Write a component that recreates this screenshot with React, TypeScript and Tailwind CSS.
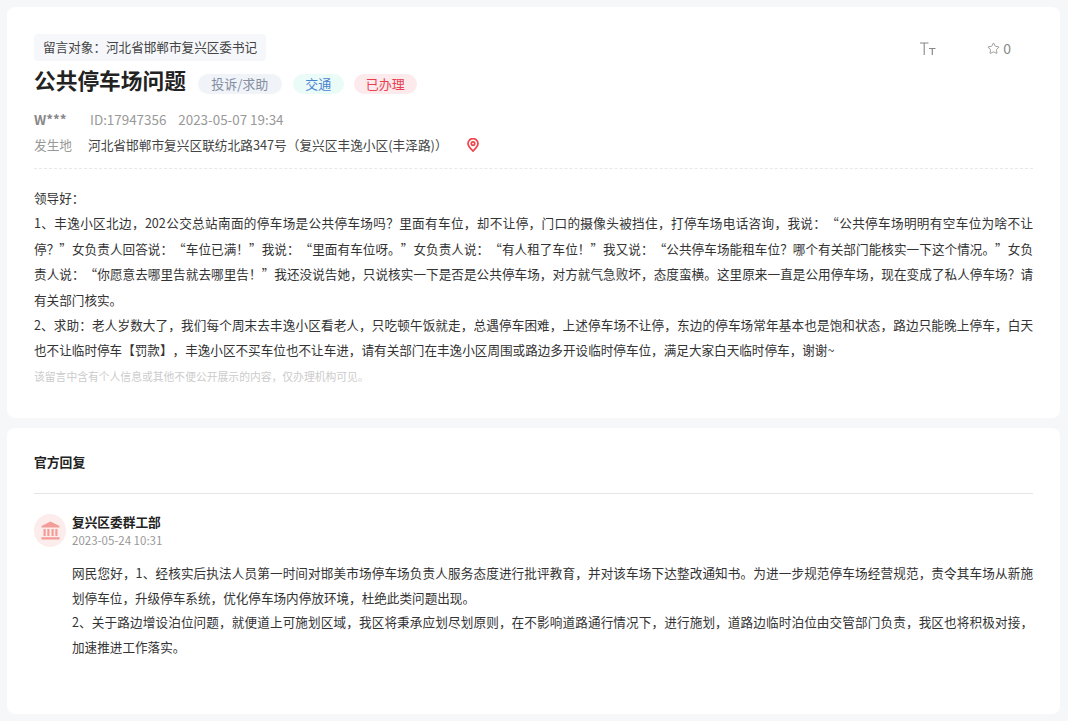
import { Star } from 'lucide-react'

function Tag({ label, className }: { label: string; className: string }) {
  return <span className={`flex h-5 items-center justify-center rounded-full text-[13px] ${className}`}>{label}</span>
}

function TextSizeIcon() {
  return (
    <svg width="16" height="13" viewBox="0 0 16 13" fill="none" stroke="#888" strokeWidth="1.1">
      <path d="M0 1h8.500M4.200 1v12" />
      <path d="M9 6.500h6.500M12.300 6.500V13" strokeWidth="1.200" />
    </svg>
  )
}

function PinIcon() {
  return (
    <svg width="12" height="14" viewBox="0 0 12 14" fill="none" stroke="#f0434a" strokeWidth="1.7">
      <path d="M6 13C3.600 10.800 1 8.600 1 5.600a5 5 0 0 1 10 0c0 3-2.600 5.200-5 7.400Z" />
      <circle cx="6" cy="5.600" r="1.700" />
    </svg>
  )
}

function BankIcon() {
  return (
    <svg width="19" height="19" viewBox="0 0 19 19" fill="#f29d97">
      <path d="M9.500 0.500 18.500 5v1.600H.500V5Z" />
      <path d="M2.500 8h2.200v7H2.500ZM6.300 8h2.200v7H6.300ZM10.500 8h2.200v7h-2.200ZM14.300 8h2.200v7h-2.200Z" />
      <path d="M.500 16.200h18v2.300H.500Z" />
    </svg>
  )
}

export default function App() {
  return (
    <div className="flex h-[721px] flex-col gap-[10px] overflow-hidden bg-[#f6f7f9] pt-[7px] pr-[8px] pl-[7px] font-['Noto_Sans_CJK_SC',sans-serif] [text-spacing-trim:space-all]">
      <section className="h-[411px] rounded-lg bg-white px-[27px] pt-[27px]">
        <div className="flex items-start justify-between">
          <div className="flex h-[27px] items-center rounded-sm bg-[#f5f7fa] px-[9px] text-[12.6px] text-[#444]">
            留言对象：河北省邯郸市复兴区委书记
          </div>
          <div className="flex items-center pt-[4px] pr-[22px] text-[14px] text-[#888]">
            <TextSizeIcon />
            <span className="ml-[51px] flex items-center gap-[3px]">
              <Star className="h-[13px] w-[13px]" strokeWidth={1.5} />
              0
            </span>
          </div>
        </div>
        <div className="mt-[4px] flex h-[30px] items-center">
          <h1 className="text-[21.7px] font-bold text-[#222]">公共停车场问题</h1>
          <div className="mt-[8px] ml-[12px] flex items-center gap-[10px]">
            <Tag label="投诉/求助" className="mr-[1px] w-[84px] bg-[#f0f3f8] text-[#848ea2]" />
            <Tag label="交通" className="w-[51px] bg-[#ebfbf8] text-[#4a84d0]" />
            <Tag label="已办理" className="w-[63px] bg-[#fdeaec] text-[#e8404f]" />
          </div>
        </div>
        <div className="mt-[14px] flex h-5 items-center text-[13.4px] text-[#999]">
          <b className="w-[56px] font-bold text-[#888]">W***</b>
          <span>ID:17947356</span>
          <span className="ml-[12px]">2023-05-07 19:34</span>
        </div>
        <div className="mt-[6px] flex h-5 items-center text-[12.7px]">
          <span className="w-[54px] text-[#999]">发生地</span>
          <span className="text-[#444]">河北省邯郸市复兴区联纺北路347号（复兴区丰逸小区(丰泽路)）</span>
          <span className="ml-[19px]"><PinIcon /></span>
        </div>
        <div className="mt-[13px] border-t border-dashed border-[#e8e8e8]" />
        <div className="mt-[16px] text-justify text-[12.6px] leading-[25.4px] text-[#333]">
          <p>领导好：</p>
          <p>1、丰逸小区北边，202公交总站南面的停车场是公共停车场吗？里面有车位，却不让停，门口的摄像头被挡住，打停车场电话咨询，我说：“公共停车场明明有空车位为啥不让停？”女负责人回答说：“车位已满！”我说：“里面有车位呀。”女负责人说：“有人租了车位！”我又说：“公共停车场能租车位？哪个有关部门能核实一下这个情况。”女负责人说：“你愿意去哪里告就去哪里告！”我还没说告她，只说核实一下是否是公共停车场，对方就气急败坏，态度蛮横。这里原来一直是公用停车场，现在变成了私人停车场？请有关部门核实。</p>
          <p>2、求助：老人岁数大了，我们每个周末去丰逸小区看老人，只吃顿午饭就走，总遇停车困难，上述停车场不让停，东边的停车场常年基本也是饱和状态，路边只能晚上停车，白天也不让临时停车【罚款】，丰逸小区不买车位也不让车进，请有关部门在丰逸小区周围或路边多开设临时停车位，满足大家白天临时停车，谢谢~</p>
        </div>
        <p className="mt-[5px] text-[10.8px] text-[#ccc]">该留言中含有个人信息或其他不便公开展示的内容，仅办理机构可见。</p>
      </section>
      <section className="h-[286px] rounded-lg bg-white px-[27px]">
        <div className="flex h-[66px] items-center border-b border-[#e5e5e5] pt-[2px] text-[12.8px] font-bold text-[#222]">官方回复</div>
        <div className="mt-[20px] flex items-start gap-[6px]">
          <div className="flex h-[33px] w-[32px] items-center justify-center rounded-full bg-[#fdecec]">
            <BankIcon />
          </div>
          <div className="-mt-[1px]">
            <div className="text-[12.7px] font-bold leading-[18px] text-[#222]">复兴区委群工部</div>
            <div className="text-[11.5px] leading-[18px] text-[#999]">2023-05-24 10:31</div>
          </div>
        </div>
        <div className="mt-[12px] pl-[38px] text-justify text-[12.6px] leading-[24.7px] text-[#333]">
          <p>网民您好，1、经核实后执法人员第一时间对邯美市场停车场负责人服务态度进行批评教育，并对该车场下达整改通知书。为进一步规范停车场经营规范，责令其车场从新施划停车位，升级停车系统，优化停车场内停放环境，杜绝此类问题出现。</p>
          <p>2、关于路边增设泊位问题，就便道上可施划区域，我区将秉承应划尽划原则，在不影响道路通行情况下，进行施划，道路边临时泊位由交管部门负责，我区也将积极对接，加速推进工作落实。</p>
        </div>
      </section>
    </div>
  )
}
